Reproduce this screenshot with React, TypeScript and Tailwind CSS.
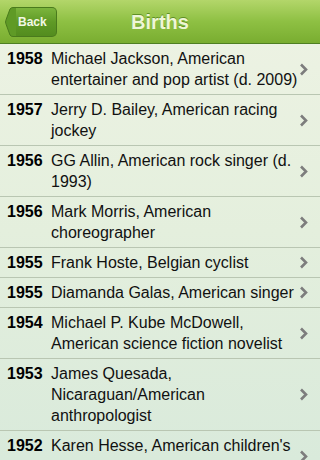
import React from 'react';

const births = [
  { year: 1958, text: 'Michael Jackson, American entertainer and pop artist (d. 2009)' },
  { year: 1957, text: 'Jerry D. Bailey, American racing jockey' },
  { year: 1956, text: 'GG Allin, American rock singer (d. 1993)' },
  { year: 1956, text: 'Mark Morris, American choreographer' },
  { year: 1955, text: 'Frank Hoste, Belgian cyclist' },
  { year: 1955, text: 'Diamanda Galas, American singer' },
  { year: 1954, text: 'Michael P. Kube McDowell, American science fiction novelist' },
  { year: 1953, text: 'James Quesada, Nicaraguan/American anthropologist' },
  { year: 1952, text: "Karen Hesse, American children's writer" },
];

const Chevron = () => (
  <svg width="9" height="13" viewBox="0 0 9 13" className="shrink-0">
    <path d="M2 1.5 L7 6.5 L2 11.5" fill="none" stroke="#7d7d7d" strokeWidth="2.6" />
  </svg>
);

const App = () => {
  return (
    <div
      className="w-[320px] h-[460px] overflow-hidden bg-[linear-gradient(180deg,#eef3e4_0%,#e4efdd_50%,#d9eadb_100%)]"
      style={{ fontFamily: '"Liberation Sans", Arial, sans-serif' }}
    >
      <header className="relative h-[44px] flex items-center justify-center border-b border-[#4e7f22] bg-[linear-gradient(180deg,#b3d66a_0%,#8ec043_50%,#79ad30_100%)]">
        <button className="absolute left-[5px] top-[7px] h-[30px] flex items-center">
          <svg width="12" height="30" viewBox="0 0 12 30" className="-mr-px">
            <path d="M12 0.5 L8 0.5 Q6 0.5 5 2 L0.8 13.5 Q0.3 15 0.8 16.5 L5 28 Q6 29.5 8 29.5 L12 29.5 Z" fill="#5f9a26" stroke="#4a7a1d" />
          </svg>
          <span className="h-[30px] pl-[2px] pr-[9px] flex items-center rounded-r-[5px] border border-l-0 border-[#4a7a1d] bg-[linear-gradient(180deg,#7cb53d_0%,#5f9a26_50%,#538c1f_100%)] text-[12px] font-bold text-[#f3f8e6]">
            Back
          </span>
        </button>
        <h1 className="text-[20px] font-bold text-[#eef6d6] [text-shadow:0_-1px_0_#5f8f27]">Births</h1>
      </header>

      <ul>
        {births.map((b, i) => (
          <li key={i} className="flex items-center border-b border-[#b9c6b2] pl-[7px] pr-[12px] py-[4px]">
            <span className="w-[44px] shrink-0 self-start text-[16px] leading-[21px] font-bold text-black">{b.year}</span>
            <span className="flex-1 text-[16px] leading-[21px] text-[#111]">{b.text}</span>
            <Chevron />
          </li>
        ))}
      </ul>
    </div>
  );
};

export default App;
